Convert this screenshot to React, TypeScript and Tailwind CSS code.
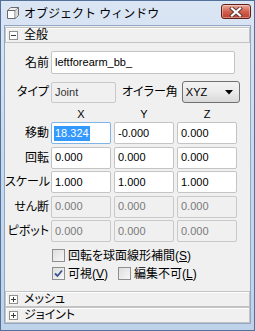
import React from "react";

const F = { fontFamily: '"Liberation Sans", "Noto Sans CJK JP", sans-serif' };

function Cube() {
  return (
    <svg width="14" height="14" viewBox="0 0 14 14">
      <polygon points="1.5,4.5 5,1.5 12.5,1.5 12.5,9.5 9,12.5 1.5,12.5" fill="#fff" stroke="#6b6b6b" strokeWidth="1" />
      <polyline points="1.5,4.5 9,4.5 12.5,1.5" fill="none" stroke="#6b6b6b" strokeWidth="1" />
      <line x1="9" y1="4.5" x2="9" y2="12.5" stroke="#6b6b6b" strokeWidth="1" />
      <polygon points="9.5,5 12,3 12,9.3 9.5,11.5" fill="#d9d9d9" />
      <polygon points="2.5,4 5.3,2 11.5,2 8.8,4" fill="#eeeeee" />
    </svg>
  );
}

function CloseBtn() {
  return (
    <div className="w-[30px] h-[15px] rounded-[3px] border border-[#5e2219] bg-gradient-to-b from-[#e9a898] via-[#d2614e] to-[#c0402d] flex items-center justify-center shadow-[inset_0_0_0_1px_rgba(255,255,255,0.35)]">
      <svg width="14" height="10" viewBox="0 0 14 10">
        <path d="M3 1.5 L11 8.5 M11 1.5 L3 8.5" stroke="#5a3a36" strokeWidth="4" strokeLinecap="square" />
        <path d="M3 1.5 L11 8.5 M11 1.5 L3 8.5" stroke="#ffffff" strokeWidth="2.2" strokeLinecap="square" />
      </svg>
    </div>
  );
}

function Toggle({ open }: { open: boolean }) {
  return (
    <div className="w-[9px] h-[9px] border border-[#919191] bg-white flex items-center justify-center relative shrink-0">
      <div className="absolute left-[1px] top-[3px] w-[5px] h-[1px] bg-[#3a3a3a]" />
      {!open && <div className="absolute left-[3px] top-[1px] w-[1px] h-[5px] bg-[#3a3a3a]" />}
    </div>
  );
}

function Header({ open, label }: { open: boolean; label: string }) {
  return (
    <div className="h-[16px] border border-[#c3c3c3] bg-[#f0f0f0] flex items-center pl-[3px] gap-[6px] shadow-[inset_1px_1px_0_#ffffff]">
      <Toggle open={open} />
      <span className="text-[12px] leading-none text-black [font-feature-settings:'palt']">{label}</span>
    </div>
  );
}

function Label({ children }: { children: React.ReactNode }) {
  return (
    <div className="w-[44px] shrink-0 text-right text-[12px] leading-none text-black whitespace-nowrap [font-feature-settings:'palt']">
      {children}
    </div>
  );
}

function Input({ value, disabled, selected, w }: { value: string; disabled?: boolean; selected?: boolean; w: string }) {
  return (
    <div
      className={
        "h-[22px] rounded-[2px] border flex items-center pl-[2px] text-[11px] leading-none " +
        w +
        (disabled
          ? " bg-[#f0f0f0] border-[#c9c9c9] text-[#7a7a7a]"
          : selected
          ? " bg-white border-[#7fb4e6] text-black"
          : " bg-white border-[#c4c4c4] text-black")
      }
    >
      {selected ? <span className="bg-[#3399ff] text-white px-[1px] py-[2px]">{value}</span> : <span className="pl-[1px]">{value}</span>}
    </div>
  );
}

function VecRow({ label, vals, disabled, sel }: { label: string; vals: string[]; disabled?: boolean; sel?: boolean }) {
  return (
    <div className="flex items-center gap-[2px]">
      <Label>{label}</Label>
      <div className="flex gap-[3px]">
        {vals.map((v, i) => (
          <Input key={i} value={v} disabled={disabled} selected={sel && i === 0} w="w-[60px]" />
        ))}
      </div>
    </div>
  );
}

function Check({ checked }: { checked?: boolean }) {
  return (
    <div className="w-[13px] h-[13px] border border-[#8e8f8f] bg-gradient-to-br from-[#dedede] to-[#f7f7f7] flex items-center justify-center shrink-0">
      {checked && (
        <svg width="9" height="9" viewBox="0 0 9 9">
          <path d="M1 4.5 L3.5 7 L8 1.5" fill="none" stroke="#3b5393" strokeWidth="1.8" />
        </svg>
      )}
    </div>
  );
}

export default function App() {
  return (
    <div style={F} className="w-[255px] h-[331px] border border-[#52719a] bg-gradient-to-b from-[#dbe6f4] via-[#c7d9ee] to-[#bed3ea] flex flex-col">
      <div className="h-[24px] shrink-0 flex items-center pl-[5px] pr-[3px]">
        <Cube />
        <span className="ml-[4px] text-[12px] leading-none text-black mt-[1px]">オブジェクト ウィンドウ</span>
        <div className="ml-auto mt-[-3px]">
          <CloseBtn />
        </div>
      </div>
      <div className="mx-[3px] mb-[6px] flex-1 border border-[#90a6c2] bg-[#f0f0f0] flex flex-col">
        <div className="mt-[1px]">
          <Header open label="全般" />
        </div>
        <div className="flex flex-col pt-[8px]">
          <div className="flex items-center gap-[2px]">
            <Label>名前</Label>
            <div className="h-[23px] w-[184px] rounded-[2px] border border-[#c4c4c4] bg-white flex items-center pl-[3px] text-[11px] leading-none text-black">
              leftforearm_bb_
            </div>
          </div>
          <div className="flex items-center gap-[2px] mt-[7px]">
            <Label>タイプ</Label>
            <div className="h-[21px] w-[65px] rounded-[2px] border border-[#c9c9c9] bg-[#f0f0f0] flex items-center pl-[3px] text-[11px] leading-none text-[#333]">
              Joint
            </div>
            <span className="ml-[4px] text-[12px] leading-none text-black whitespace-nowrap [font-feature-settings:'palt']">オイラー角</span>
            <div className="ml-[2px] h-[22px] w-[58px] rounded-[3px] border border-[#707070] bg-gradient-to-b from-[#f3f3f3] via-[#ebebeb] to-[#d9d9d9] flex items-center pl-[3px] pr-[6px] text-[11px] leading-none text-black">
              <span>XYZ</span>
              <svg className="ml-auto" width="8" height="5" viewBox="0 0 8 5">
                <path d="M0 0 L8 0 L4 4.5 Z" fill="#000" />
              </svg>
            </div>
          </div>
          <div className="flex gap-[3px] pl-[46px] mt-[4px] h-[14px] items-center text-[11px] leading-none text-black">
            <div className="w-[60px] text-center">X</div>
            <div className="w-[60px] text-center">Y</div>
            <div className="w-[60px] text-center">Z</div>
          </div>
          <div className="flex flex-col gap-[2.5px] mt-[1px]">
            <VecRow label="移動" vals={["18.324", "-0.000", "0.000"]} sel />
            <VecRow label="回転" vals={["0.000", "0.000", "0.000"]} />
            <VecRow label="スケール" vals={["1.000", "1.000", "1.000"]} />
            <VecRow label="せん断" vals={["0.000", "0.000", "0.000"]} disabled />
            <VecRow label="ピボット" vals={["0.000", "0.000", "0.000"]} disabled />
          </div>
          <div className="flex flex-col gap-[5px] mt-[7px] pl-[47px] text-[12px] leading-none text-black [font-feature-settings:'palt']">
            <div className="flex items-center gap-[3px]">
              <Check />
              <span>
                回転を球面線形補間(<span className="underline">S</span>)
              </span>
            </div>
            <div className="flex items-center">
              <Check checked />
              <span className="ml-[3px]">
                可視(<span className="underline">V</span>)
              </span>
              <div className="ml-[10px]">
                <Check />
              </div>
              <span className="ml-[3px]">
                編集不可(<span className="underline">L</span>)
              </span>
            </div>
          </div>
        </div>
        <div className="mt-auto flex flex-col">
          <Header open={false} label="メッシュ" />
          <Header open={false} label="ジョイント" />
        </div>
      </div>
    </div>
  );
}
